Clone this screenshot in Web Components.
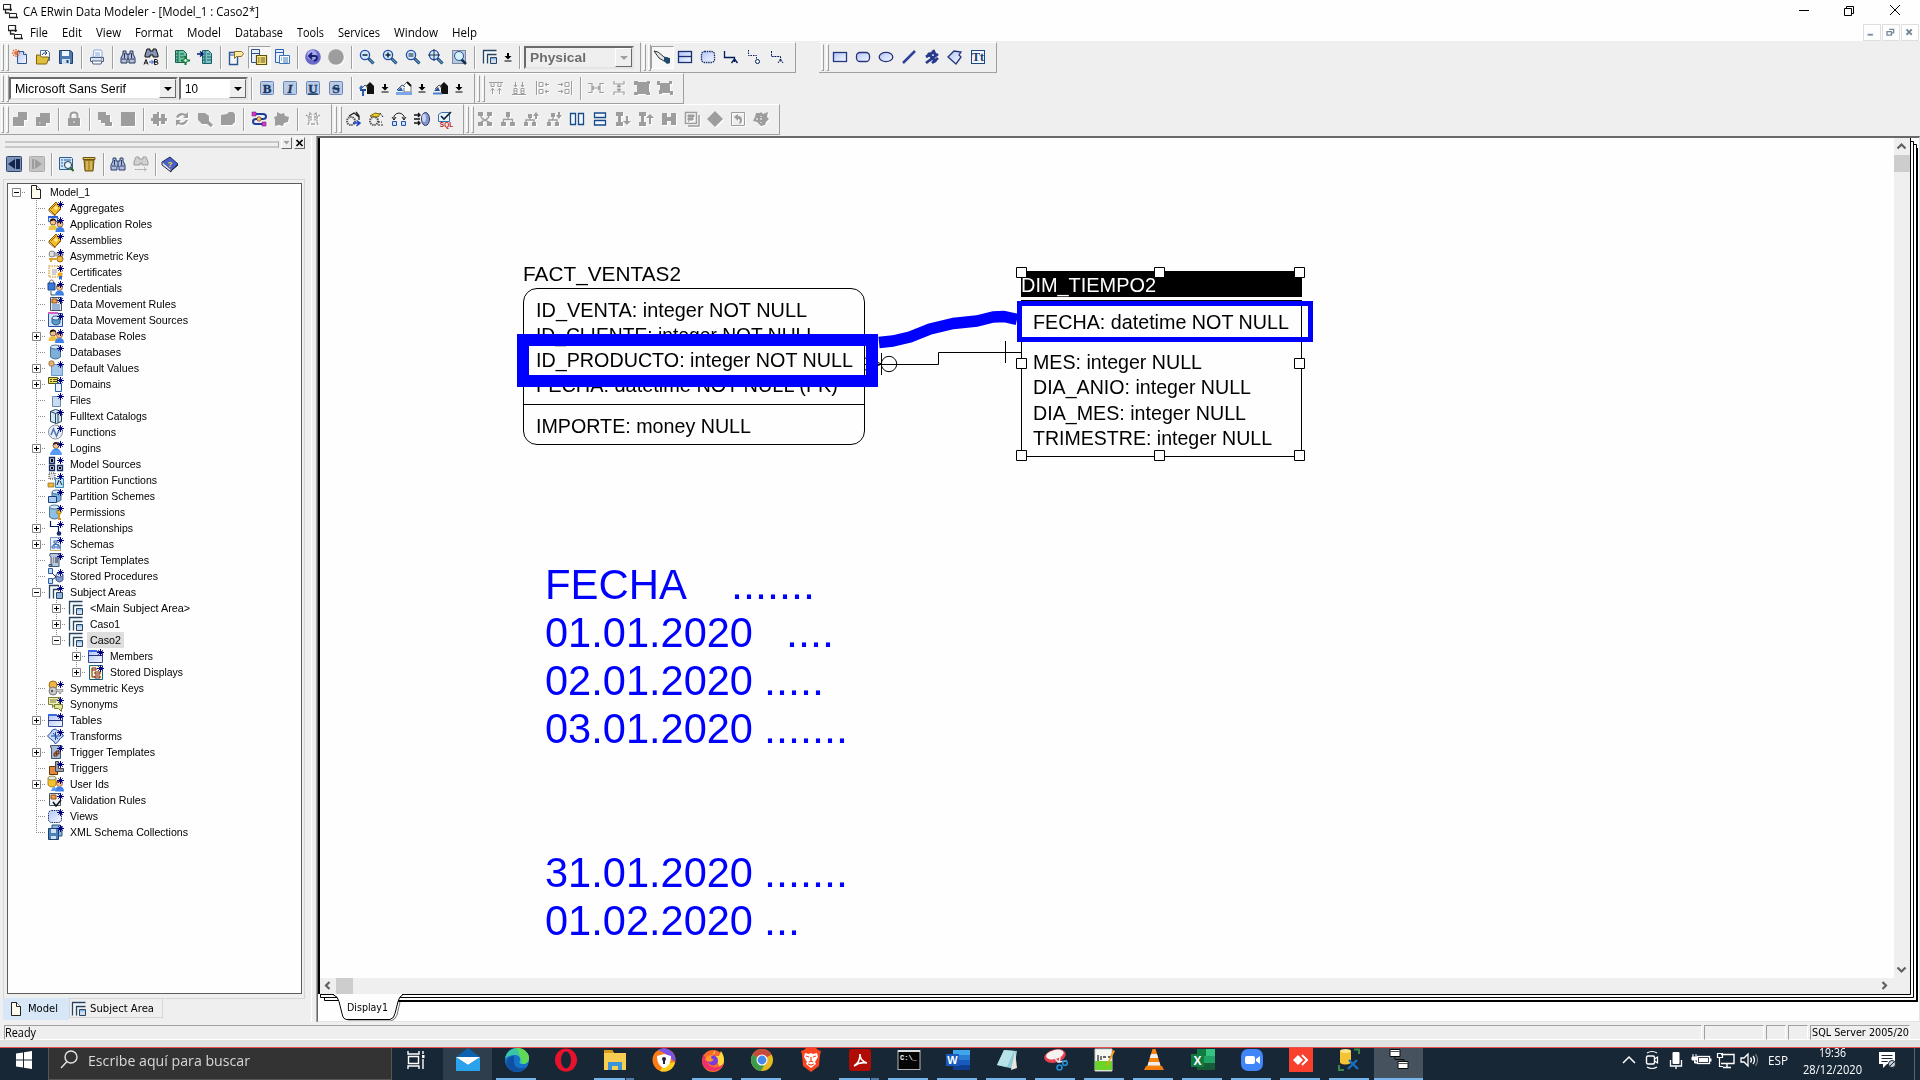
<!DOCTYPE html>
<html lang="es">
<head>
<meta charset="utf-8">
<title>CA ERwin Data Modeler</title>
<style>
html,body{margin:0;padding:0}
body{width:1920px;height:1080px;overflow:hidden;background:#efefef;font-family:"Liberation Sans",sans-serif;color:#000}
</style>
</head>
<body>
<erwin-desktop></erwin-desktop>
<script>
const star='<path d="M12.500 1v7M9 4.500h7M10.300 2.300l4.400 4.400M14.700 2.300l-4.400 4.400" stroke="#000080" stroke-width="1"/>';
const zoomGlass=(inner)=>`<path d="M9.500 9.500l5 5" stroke="#14304f" stroke-width="3"/><path d="M10 10l4.500 4.500" stroke="#4aa2d8" stroke-width="1.200"/><circle cx="6" cy="6" r="4.600" fill="#cfeafa" stroke="#2449a8" stroke-width="1.300"/>${inner}`;
const bino=(c,f)=>`<path d="M3 2h3v3h4V2h3v3l2 4v5H9v-4H7v4H1V9l2-4z" fill="${f}" stroke="${c}"/><path d="M2 10h4M10 10h4M8 5v5M4.500 4v5M11.500 4v5" stroke="${c}"/>`;
const man=(x,y,hair,shirt)=>`<circle cx="${x}" cy="${y}" r="3" fill="#f2c08a" stroke="${hair}" stroke-width=".6"/><path d="M${x-3} ${y-.5}a3 3 0 0 1 6 0l-2-1.2z" fill="${hair}"/><path d="M${x-4.500} ${y+8}q0-5 4.500-5t4.500 5z" fill="${shirt}"/>`;
const cyl=(x,y,w,h,f,s)=>`<path d="M${x} ${y+2}v${h-4}q${w/2} 4 ${w} 0v-${h-4}" fill="${f}" stroke="${s}" stroke-width=".8"/><ellipse cx="${x+w/2}" cy="${y+2}" rx="${w/2}" ry="2" fill="#d5ebfa" stroke="${s}" stroke-width=".8"/>`;
const letter=(t,s)=>`<rect x="1.500" y="1.500" width="13" height="13" rx="1" fill="#bccbe4" stroke="#6a86b8"/><text x="8" y="12.500" text-anchor="middle" font-family="Liberation Serif,serif" font-size="13" font-weight="bold" fill="#173767" stroke="#173767" stroke-width=".3" style="${s}">${t}</text>`;
const house='<path d="M7 6l4-4 4 4v8H8V8" fill="#111"/><path d="M9 7l-3-2-4 4" fill="none" stroke="#555"/>';
const T={
logo:'<path d="M1.500 1.500h7v5h-7zM7.500 10.500h7v4h-7z" fill="#fff" stroke="#222"/><path d="M8.500 1v7M3.500 7v3h4M1 6.500h9M7 14.500h9" fill="none" stroke="#222" stroke-width="1.300"/>',
new:'<path d="M5.500 2.500h6l3 3v9h-9z" fill="url(#pg)" stroke="#2c5590"/><path d="M11.500 2.500v3h3" fill="#fff" stroke="#2c5590"/><path d="M4 0v8M0 4h8M1 1l6 6M7 1L1 7" stroke="#e86a30" stroke-width="1.400" stroke-dasharray="1.500 .7"/>',
open:'<path d="M5.500 1.500h7l2 2v8h-9z" fill="#fff" stroke="#4a72a8"/><path d="M1.500 13V6h3l2 2h7v2l-2 5h-10z" fill="#e0bf3a" stroke="#7d6510"/><path d="M7 6q1-3 4-2M10 2l2 2-2 2" fill="none" stroke="#1c3f74"/>',
save:'<path d="M1.500 1.500h11l2 2v11h-13z" fill="#4a78b0" stroke="#1c3f6c"/><path d="M4 2h7v5H4z" fill="#eef4fb"/><path d="M4 10h8v5H4z" fill="#cfe0f4"/><path d="M9.500 11v3" stroke="#1c3f6c" stroke-width="2"/>',
print:'<path d="M5 1h7l1 1v6H4z" fill="#fff" stroke="#88a8d8"/><path d="M1.500 8.500h13v4h-13z" fill="#d8e4f4" stroke="#4a5f85"/><path d="M3 12h10l-1 3H4z" fill="#fff" stroke="#4a5f85"/><path d="M6 4h5M6 6h5" stroke="#7aa0e0"/><circle cx="12.500" cy="10" r=".8" fill="#e87030"/>',
find:bino('#22335a','#b4c2dc'),
repl:'<path d="M4 0h3v2h3V0h3l2 6v2h-5V6H7v2H2V6z" fill="#8494b4" stroke="#111"/><path d="M1 15.500l2-5 2 5M1.800 14h2.500M11.500 10.500v5h2q1.500-.2 1.500-1.400t-1.500-1.200h-2 1.800q1.200 0 1.200-1.200t-1.200-1.200z" fill="none" stroke="#111"/><path d="M6 13h4M8.500 11l2 2-2 2" stroke="#2255cc" fill="none"/>',
comp1:'<path d="M1.500 1.500h8l3 3v9h-11z" fill="#6dc6a0" stroke="#1d5f58"/><path d="M4 2v12M6 5h4M6 8h5M2 5h2M2 8h2M2 11h2" stroke="#1d5f58"/><path d="M11.500 7v9M7 11.500h9" stroke="#0a7a28" stroke-width="2"/><path d="M11.500 9l2.500 2.500-2.500 2.500L9 11.500z" fill="#cfe8d4" stroke="#063"/>',
comp2:'<path d="M5.500 1.500h6l3 3v10h-9z" fill="#7cc4c4" stroke="#1d5f68"/><path d="M8 2v12M10 5h3M10 8h4M10 11h4M6 8h2M6 11h2" stroke="#1d5f68"/><path d="M0 5h5M3 2.500L6 5 3 7.500" stroke="#001a70" stroke-width="1.500" fill="none"/>',
ent:'<path d="M1.500 3.500h8v12h-8z" fill="#f4f6fb" stroke="#2c5590" stroke-width="1.400"/><path d="M6.500 2.500h7l2 2-2 3h-5l-2 2z" fill="#ffeaa0" stroke="#8a6c28"/><path d="M2 6h4" stroke="#2c5590"/>',
lvl1:'<path d="M.5 .5h8v13h-8zM1 4.500h7" fill="#eaf0fb" stroke="#2d4f90"/><path d="M5.500 6.500h10v9h-10z" fill="#ffe98a" stroke="#5f5010" stroke-width="1.200"/><path d="M7 9h1.500M7 11h1.500M7 13h1.500M9.500 9h4.500M9.500 11h4.500M9.500 13h4.500" stroke="#5f5010"/>',
lvl2:'<path d="M1.500 .5h8v13h-8zM2 3.500h7" fill="#eaf0fb" stroke="#2d5fb0"/><path d="M5.500 6.500h10v8h-10z" fill="#fff" stroke="#3a78b8"/><path d="M7 9h1M7 11h1M9 9h5M9 11h5M9 13h5" stroke="#3a78b8"/>',
undo:'<circle cx="8" cy="8" r="7.800" fill="#6a68c8"/><circle cx="7" cy="6" r="5" fill="#a8a6ec"/><path d="M5 7h5q2 0 2 2t-3 3M7 4L4 7l3 3" fill="none" stroke="#15206c" stroke-width="1.800"/>',
redo:'<circle cx="8" cy="8" r="7.800" fill="#9d9d9d"/>',
zout:zoomGlass('<path d="M3.500 6h5" stroke="#123" stroke-width="1.500"/>'),
zin:zoomGlass('<path d="M3.500 6h5M6 3.500v5" stroke="#123" stroke-width="1.500"/>'),
zeq:zoomGlass('<path d="M3.500 5h5M3.500 7h5" stroke="#123" stroke-width="1.200"/>'),
zfit:zoomGlass('<path d="M6 0v12M0 6h12" stroke="#234" stroke-width="1"/>'),
zsel:'<rect x="1.500" y="1.500" width="13" height="13" fill="#b8c8e0" stroke="#235" stroke-dasharray="1 1"/><path d="M10 10l5 5" stroke="#14304f" stroke-width="2.500"/><circle cx="8" cy="7" r="4.500" fill="#d8f0fc" stroke="#235090"/>',
sub:'<path d="M1.500 1.500h13v4h-9v9h-4z" fill="#f4f8fc"/><path d="M1.500 14.500v-13h13M5.500 14.500v-9h9" fill="none" stroke="#2b4560" stroke-width="1.300"/><path d="M8.500 8.500h6v6h-6z" fill="#cfe0f4" stroke="#2b4560"/><path d="M9 9.800h5" stroke="#6aa0d8"/>',
cur:'<path d="M0 2l4 1 6 5 4 1v4l-4-1-5-3z" fill="#dfe9ef" stroke="#333"/><path d="M10 8l6 1v5l-3 1-3-3z" fill="#1f4a70"/>',
tbl:'<rect x="1.500" y="2.500" width="13" height="11" fill="url(#pg)" stroke="#1a3070" stroke-width="1.300"/><path d="M1 7.500h14" stroke="#1a3070" stroke-width="1.300"/>',
view:'<rect x="1.500" y="2.500" width="13" height="11" rx="3" fill="url(#pg)" stroke="#1a3070" stroke-width="1.300" stroke-dasharray="1.500 .8"/>',
r1:'<path d="M1.500 2v6.500h10V13M11.500 10l-3 4M11.500 10l3 4" fill="none" stroke="#001a5c" stroke-width="1.300"/>',
r2:'<path d="M2.500 1v5.500h8v3" fill="none" stroke="#001a5c" stroke-dasharray="1.500 1"/><circle cx="11.500" cy="12.500" r="2" fill="#fff" stroke="#001a5c"/>',
r3:'<path d="M2.500 2v5.500h9V13M11.500 10l-2.500 4M11.500 10l2.500 4" fill="none" stroke="#001a5c" stroke-dasharray="2 .8"/>',
s1:'<rect x="1.500" y="3.500" width="13" height="9" fill="url(#pg)" stroke="#26357c" stroke-width="1.300"/>',
s2:'<rect x="1.500" y="3.500" width="13" height="9" rx="3.500" fill="url(#pg)" stroke="#26357c" stroke-width="1.300"/>',
s3:'<ellipse cx="8" cy="8" rx="6.800" ry="4.600" fill="url(#pg)" stroke="#26357c" stroke-width="1.300"/>',
s4:'<path d="M2 14L14 2" stroke="#2c409c" stroke-width="2.500"/>',
s5:'<path d="M2 8l9-6M2 14l12-9M8 14l6-5M4 4l8 9M9 1l3 6" stroke="#28398c" stroke-width="2.800"/>',
s6:'<path d="M1 8l6-6 7 1-2 3 2 2-5 7z" fill="url(#pg)" stroke="#26357c" stroke-width="1.300"/>',
s7:'<rect x="1.500" y="1.500" width="13" height="13" fill="#f2f5fb" stroke="#1a4a80"/><text x="8" y="12" text-anchor="middle" font-family="Liberation Serif,serif" font-size="12" font-weight="bold" fill="#1a4070">Tt</text>',
B:letter('B',''),I:letter('I','font-style:italic'),U:letter('U','text-decoration:underline'),S:letter('S','text-decoration:line-through'),
hT:house+'<path d="M1 10h6M4 10v6" stroke="#1c4f9c" stroke-width="1.800"/><path d="M3 6L1 9" stroke="#2c6fcc" stroke-width="2.400"/>',
hF:'<path d="M7 6l4-4 4 4v6H8V8" fill="#fff" stroke="#777"/><path d="M11 2l4 4" stroke="#111" stroke-width="2"/><path d="M9 7l-3-2-5 5" stroke="#357" fill="none"/><path d="M0 12h16v3H0z" fill="#7aa6e4"/><path d="M1 11l4-4 2 4z" fill="#2c5fb0"/>',
hL:house+'<path d="M0 13.500h9" stroke="#4a80d0" stroke-width="2"/><path d="M1 11l4-4 2 4z" fill="#234f90"/>',
d1:'<path d="M6 1h9v8h-3v6H1V6h5z" fill="#9d9d9d"/>',d2:'<path d="M5 2h10v10h-4v3H1V6h4z" fill="#9d9d9d"/><path d="M4 12h1.500" stroke="#eee"/>',
lock:'<path d="M4.500 8V4.500q0-3 3.500-3t3.500 3V8" fill="none" stroke="#9d9d9d" stroke-width="2"/><path d="M2 7h12v8H2z" fill="#9d9d9d"/><path d="M8 10v2" stroke="#eee"/>',
d3:'<path d="M1 1h8v3h4v7h2v4H8v-3H4V9H1z" fill="#9d9d9d"/>',d4:'<path d="M1 1h14v14H1z" fill="#9d9d9d"/>',
d5:'<path d="M2 3h5v10H2zM10 3h4v10h-4zM6 1h2v14H6zM0 7h16v3H0z" fill="#9d9d9d"/>',
d6:'<path d="M2 6q2-4 6-4l4 1 2-2v6H9l2-2q-4-2-7 2zM14 9q-2 5-6 5l-4-1-2 2V9h5l-2 2q4 2 7-2z" fill="#9d9d9d"/>',
d7:'<path d="M1 2h7l4 3v5l4 4-2 2-4-3H5L1 9z" fill="#9d9d9d"/>',d8:'<path d="M1 4l6-1 2-2h4l2 2v8l-3 3H1z" fill="#9d9d9d"/>',
flow:'<path d="M3 3h9q3 0 3 2.500T12 8H5Q2 8 2 10.500T5 13h7" fill="none" stroke="#1c3f9c" stroke-width="2"/><path d="M1 1h4v4H1zM11 11h4v4h-4z" fill="#d838c0" stroke="#702090" stroke-width=".6"/><circle cx="8" cy="8" r="2.200" fill="#f0d040" stroke="#604" stroke-width=".6"/>',
d9:'<path d="M3 1l4 2 3-1 1 3 4 1-1 5-4 1-1 3-4-1-4 1V9L0 6l3-1z" fill="#9d9d9d"/>',
d10:'<path d="M1 4l3 2 1-4 2 2M15 4l-3 2-1-4-2 2M4 6v6M6 5v5M10 5v5M12 6v6M7 12v2M9 12v2M3 14l1-3M13 14l-1-3" fill="none" stroke="#9d9d9d" stroke-width="1.400" stroke-dasharray="2 .5"/>',
g1:'<circle cx="6" cy="10" r="4" fill="#eee" stroke="#555" stroke-width="2" stroke-dasharray="1.400 .8"/><path d="M4 5l5-3 5 4M11 1l3 4v4" fill="none" stroke="#222" stroke-width="1.300"/><path d="M8 12h6M11.500 9.500L15 12l-3.500 2.800" stroke="#1d3fc0" stroke-width="1.500" fill="none"/>',
g2:'<circle cx="6" cy="10" r="4" fill="#eee" stroke="#555" stroke-width="2" stroke-dasharray="1.400 .8"/><path d="M2 5l5-3 5 1-2 3z" fill="#ecca30" stroke="#7c6808"/><path d="M12 2l3 4M10 14h6M10 11h4" stroke="#222" stroke-dasharray="2 1"/>',
g3:'<path d="M3 9V5q2-3 5-3t5 3v4M1 6l2 3 2-3M11 6l2 3 2-3" fill="none" stroke="#222"/><path d="M1.500 10.500h4v4h-4zM10.500 10.500h4v4h-4z" fill="#cfe0fa" stroke="#2450b0"/>',
g4:'<path d="M0 4h6M0 8h6M0 12h6M4 2l2 2-2 2M4 10l2 2-2 2" fill="none" stroke="#111" stroke-width="1.300"/><ellipse cx="11.500" cy="8" rx="4" ry="6.500" fill="#8494cc" stroke="#28386c"/><ellipse cx="10" cy="7" rx="2" ry="4" fill="#c8d4f4"/>',
g5:'<path d="M1.500 3.500l3-2h8v9h-11z" fill="#eaf4fc" stroke="#3a70a8"/><path d="M4 5l3 3 7-7" fill="none" stroke="#123" stroke-width="1.600"/><text x="9.500" y="15.500" text-anchor="middle" font-family="Liberation Sans,sans-serif" font-size="6.500" font-weight="bold" fill="#c02020">SQL</text>',
a1:'<path d="M1 2.500h14M3 2.500v4h3v-4M10 2.500v4h3v-4M4.500 8v6M11.500 8v6M2.500 10.500l2-2 2 2M9.500 10.500l2-2 2 2" fill="none" stroke="#9d9d9d"/>',
a2:'<path d="M1 14.500h14M3 8.500h3v5H3zM10 8.500h3v5h-3zM3 11h3M10 11h3M4.500 2v5M11.500 2v5M3 5l1.500 2L6 5M10 5l1.500 2L13 5" fill="none" stroke="#9d9d9d"/>',
a3:'<path d="M2.500 1v14M5 2.500h4v4H5zM5 9.500h4v4H5zM15 4.500h-4M13 3l-2 1.500L13 6M15 11.500h-4M13 10l-2 1.500 2 1.500" fill="none" stroke="#9d9d9d"/>',
a4:'<path d="M14.500 1v14M8 2.500h4v4H8zM8 9.500h4v4H8zM1 4.500h5M4 3l2 1.500L4 6M1 11.500h5M4 10l2 1.500L4 13" fill="none" stroke="#9d9d9d"/>',
a5:'<path d="M0 3.500h4v9H0M16 3.500h-4v9h4M4 8h8M6 6L4.500 8 6 10M10 6l1.500 2L10 10" fill="none" stroke="#9d9d9d" stroke-width="1.200"/>',
a6:'<path d="M3 1v3h10V1M3 15v-3h10v3M8 5v6M6 7l2-2 2 2M6 9l2 2 2-2" fill="none" stroke="#9d9d9d" stroke-width="1.200"/>',
a7:'<path d="M0 1h4v1h9V1h3v3h-1v8h1v3h-4v-1H4v1H0v-3h3V5H0z" fill="#9d9d9d"/>',
a8:'<path d="M0 1h3v2h9V1h3v3h-2v7h3v4h-3v-2H5v1H2v-4h1V5H0z" fill="#9d9d9d"/>',
t1:'<path d="M1 1h5v4H1zM10 1h5v4h-5zM1 11h5v4H1zM10 11h5v4h-5z" fill="#9d9d9d"/><path d="M4 5q0 3 8 6M12 5q0 3-8 6" stroke="#9d9d9d" fill="none" stroke-width="1.500"/>',
t2:'<path d="M6 1h4v5H6zM1 11h5v4H1zM10 11h5v4h-5z" fill="#9d9d9d"/><path d="M8 6v3M3.500 11V8.500h9V11" stroke="#9d9d9d" fill="none" stroke-width="1.300"/>',
t3:'<path d="M5 3h4v4H5zM1 11h4v4H1zM9 11h4v4H9zM10 5l3-4 3 4h-2v3h-2V5z" fill="#9d9d9d"/><path d="M7 7v2M3 11V9h8v2" stroke="#9d9d9d" fill="none" stroke-width="1.400"/>',
t4:'<path d="M5 2h4v4H5zM1 11h4v4H1zM9 11h4v4H9zM10 4l3 4 3-4h-2V1h-2v3z" fill="#9d9d9d"/><path d="M7 6v3M3 11V9h8v2" stroke="#9d9d9d" fill="none" stroke-width="1.400"/>',
c1:'<path d="M1.500 2.500h5v11h-5zM9.500 2.500h5v11h-5z" fill="#f2f7ff" stroke="#174a88" stroke-width="1.300"/>',
c2:'<path d="M2.500 2h11v4.500h-11zM2.500 9.500h11V14h-11z" fill="#f2f7ff" stroke="#174a88" stroke-width="1.300"/>',
t5:'<path d="M1 1h7v4H1zM1 11h7v4H1zM3 5h3v6H3zM11 5h2v5h3l-4 4-4-4h3z" fill="#9d9d9d"/>',
t6:'<path d="M1 1h7v4H1zM1 11h7v4H1zM3 5h3v6H3zM11 13h2V7h3l-4-4-4 4h3z" fill="#9d9d9d"/>',
t7:'<path d="M1 2h5v12H1zM10 2h5v12h-5zM6 6h4v4H6z" fill="#9d9d9d"/>',
t8:'<path d="M1.500 1.500h11v11h-11zM15 4v11H4" fill="none" stroke="#9d9d9d" stroke-width="1.500"/><path d="M4 4h6v2H4zM4 7h5v2H4zM4 11l6-6" fill="#9d9d9d" stroke="#9d9d9d"/>',
t9:'<path d="M8 0l8 8-8 8-8-8z" fill="#9d9d9d"/>',
t10:'<path d="M1.500 1.500h13v13h-13z" fill="none" stroke="#9d9d9d"/><path d="M4 6l4-3v2q4 0 4 4t-3 4q2-5-1-5v2z" fill="#9d9d9d"/>',
t11:'<path d="M8 1l2 2 5-2-1 5 2 2-3 3-1 3-4 1-4-4-4-1 2-4 1-4h4z" fill="#9d9d9d"/><path d="M3 8h2M7 8h2M8 5v1M8 11v1" stroke="#fff"/>',
back:'<rect x=".5" y=".5" width="15" height="15" rx="1" fill="#7d93b8" stroke="#2d4470"/><path d="M2 8l7-5v10zM10 3h4v10h-4z" fill="#13254c"/>',
fwd:'<rect x=".5" y=".5" width="15" height="15" rx="1" fill="#c4c4c4" stroke="#acacac"/><path d="M3 3h2v10H3zM6 3l7 5-7 5z" fill="#9d9d9d"/>',
prop:'<path d="M1.500 1.500h12l1 1v11h-13z" fill="#cfe4fa" stroke="#2c5f98"/><path d="M3 4h2M6 4h7M3 7h2M3 10h2M6 7h3" stroke="#2c5f98"/><circle cx="10" cy="9" r="3.500" fill="#e8f6ff" stroke="#234"/><path d="M12.500 11.500l3 3.500" stroke="#286a28" stroke-width="2"/>',
trash:'<path d="M3 4h10l-1 11H4z" fill="#b8942c" stroke="#6c5410"/><path d="M2 1.500h12v2H2z" fill="#e0c060" stroke="#6c5410"/><path d="M6 5v9M10 5v9" stroke="#ecd890"/>',
find2:bino('#2a3c68','#aebddd'),
findg:'<path d="M3 1h3v2h4V1h3l2 5v3H9V7H7v2H1V6z" fill="#d0d0d0" stroke="#9d9d9d"/><path d="M2 13.500h11M11 11.500l2.500 2-2.500 2" fill="none" stroke="#9d9d9d" stroke-dasharray="1.500 .6"/>',
help:'<path d="M0 6l8-5 8 7-7 7z" fill="#4a5fc4" stroke="#1a2a6c"/><path d="M0 6v3l9 7v-2M9 15l7-6" fill="#e8e8f4" stroke="#223"/><text x="8" y="10.500" text-anchor="middle" font-size="8" font-weight="bold" fill="#f4e440" font-family="Liberation Sans,sans-serif">?</text>',
doc:'<path d="M3.500 1.500h5l4 4v9h-9z" fill="#fffbee" stroke="#222"/><path d="M8.500 1.500v4h4" fill="#fff" stroke="#222"/>',
agg:'<path d="M1 9l7-7 5 6-6 7z" fill="#f6bf28" stroke="#8a5c08"/><path d="M1 9v2l6 5v-2M3 9l5-5M7 15l6-6" fill="none" stroke="#9a6810"/><path d="M6 8l2-2 2 2-2 2z" fill="#fff0a0"/>'+star,
arole:'<path d="M.5 .5h9v5h-9z" fill="#cfe0fc" stroke="#3a6fd0"/><path d="M0 1h10" stroke="#2c5fd0" stroke-width="2"/>'+man(5,6,'#201008','#ecc848')+man(12,8,'#503018','#3f80e8')+star,
key:'<circle cx="4" cy="6" r="3" fill="#e0e0e0" stroke="#888"/><path d="M6 5h9v3H6z" fill="#bbb" stroke="#777" stroke-width=".6"/><circle cx="12" cy="11" r="3" fill="#f0b840" stroke="#9a6410"/><path d="M1 10h9v2H1zM2 12h2v2H2z" fill="#e0a030"/>'+star,
cert:'<path d="M1 2h13v11H1z" fill="#fff7e0" stroke="#d8b070" stroke-width="1.600" stroke-dasharray="1.500 1"/><path d="M4 6h5M4 8h5M4 10h4" stroke="#98a8c0"/><circle cx="12" cy="10.500" r="2.300" fill="#f0a818"/><path d="M11 12v4l1.500-1 1.500 1v-4z" fill="#2c6fd8"/>'+star,
cred:'<path d="M1.500 3V2q0-2 2-2t2 2v1" fill="none" stroke="#777"/><path d="M0 3h7v7H0z" fill="#3a78d8" stroke="#1a4890"/><path d="M3 11v4h4" stroke="#357" fill="none"/>'+man(11.500,7.500,'#503018','#3f80e8')+star,
drule:'<path d="M2.500 1.500h11v13h-11z" fill="#e8eef8" stroke="#456"/><path d="M4 3h5v4H4z" fill="#f0a040" stroke="#852"/><path d="M4 9h8M4 11h8M4 13h8" stroke="#4878b0"/>'+star,
dsrc:'<path d="M.5 1.500h14v13H.5z" fill="#d0e4fa" stroke="#2c50a8"/><path d="M0 1h10" stroke="#d860c0" stroke-width="2"/>'+cyl(4,4,8,9,'#5a9cd0','#1d4470')+star,
drole:man(5,5,'#201008','#f0c040')+man(11.500,7,'#803818','#3f80e8')+star,
db:cyl(2.500,1,10,14,'#7cb0d8','#2c5880')+star,
defv:'<path d="M3.500 4.500h11v11h-11z" fill="#a4c8ec" stroke="#6a98c8"/><rect x="1" y="1" width="5" height="5" rx="1.500" fill="#dcb078" stroke="#a07838"/>'+star,
dom:'<path d="M.5 1.500h9v6h-9z" fill="#e8e060" stroke="#55500c"/><path d="M2 3.500h2M5 3.500h4M2 5.500h2M5 5.500h4" stroke="#55500c"/><path d="M7.500 7.500h6v8h-6z" fill="#eaf2fc" stroke="#2c5fa8"/>'+star,
file:'<path d="M4.500 4.500h8v10h-8z" fill="#c8dcf0" stroke="#6a88b0"/>'+star,
cat:'<path d="M2.500 3.500l5-2 6 2v10l-5 2-6-2z" fill="#d4e6f4" stroke="#234458"/><path d="M2.500 3.500l5 2 5-2M7.500 5.500v10M10 5v9.500" fill="none" stroke="#234458"/>'+star,
fun:'<circle cx="7.500" cy="8" r="7" fill="#eceef4" stroke="#8a90a0"/><path d="M3 11l2.500-6 3 7 2.500-6" fill="none" stroke="#4878b8" stroke-width="1.500"/>'+star,
login:man(8,5.500,'#402010','#3f88f0')+'<path d="M2 15q0-5 6-5t6 5z" fill="#5a9cf4"/>'+star,
msrc:'<path d="M1.500 1.500h5v6h-5zM1.500 9.500h5v5h-5zM9.500 9.500h5v5h-5z" fill="#c4d4ec" stroke="#182c60" stroke-width="1.300"/><path d="M3 4h2M3 12h2M11 12h2M4 3v3" stroke="#000" stroke-width="2"/>'+star,
pfun:'<path d="M1 1h6v6H1z" fill="#ddd" stroke="#333" stroke-dasharray="1 1"/><path d="M0 11h6v4H0z" fill="#f0b840" stroke="#8a6410" stroke-width=".7"/><path d="M7.500 6.500h8v9h-8z" fill="#bce0f4" stroke="#3a88b8"/><path d="M9 13l2-5M12 9l2 4" stroke="#124" />'+star,
psch:cyl(4,2,9,12,'#7cb0d8','#2c5880')+'<path d="M.5 8.500h8v6h-8z" fill="#a8ccf0" stroke="#1c3c80"/>'+star,
perm:cyl(1.500,1,10,14,'#8cc0e4','#2c5880')+'<circle cx="11" cy="8" r="2.200" fill="#f8c030" stroke="#a06c10"/><path d="M11 10v5h2" stroke="#d89820" stroke-width="1.800" fill="none"/>'+star,
rel:'<path d="M2.500 1v5.500h8V13" fill="none" stroke="#001a5c" stroke-width="1.200"/><circle cx="11" cy="13.500" r="2.300" fill="#1a2a70"/>'+star,
sch:'<path d="M2.500 1.500h10v13h-10z" fill="#e8f0fc" stroke="#7a98c8"/><path d="M6 5h3v2H6zM4 10h3v2H4zM9 10h3v2H9zM7.500 7v2M5.500 10V8.500h5V10" fill="none" stroke="#3a68b0"/><path d="M2 14.500h11" stroke="#d8b468"/>'+star,
scr:'<path d="M2 1.500h11q-2 1-2 4v9H3v-9Q1 4 2 1.500zM1 12.500h3v2H1z" fill="#b8c8dc" stroke="#3c5478"/><path d="M5 6h1M5 8h1M5 10h1" stroke="#d03030"/><path d="M7 6h3M7 8h3M7 10h3" stroke="#234"/>'+star,
sp:'<path d="M.5 .5h4v5h-4zM.5 10.500h4v5h-4z" fill="#c4dcf8" stroke="#2c60a8"/><path d="M4 5l4 4-4 3" stroke="#234" fill="none"/>'+cyl(8,5,7,9,'#8098d0','#2c4080')+star,
suba:'<path d="M1.500 1.500h13v4h-9v9h-4z" fill="#f4f8fc"/><path d="M1.500 14.500v-13H11M5.500 14.500v-9h6" fill="none" stroke="#2b4560" stroke-width="1.300"/><path d="M8.500 8.500h6v6h-6z" fill="#8cb4e4" stroke="#2b4560"/>'+star,
memb:'<path d="M.5 3.500h14v11H.5z" fill="url(#pg)" stroke="#3a4a98"/><path d="M0 3h9" stroke="#3a68e0" stroke-width="2"/><path d="M0 7.500h15" stroke="#26357c"/>'+star,
sdisp:'<path d="M1.500 1.500h13v14h-13z" fill="#fff4c8" stroke="#146488"/><path d="M4 4h4v2H4zM7 8h5v2H7zM7 12h5v2H7zM4 6v7h3" fill="none" stroke="#702020"/>'+star,
skey:'<circle cx="5" cy="5" r="4" fill="#f0b440" stroke="#a06c10"/><circle cx="5" cy="11" r="4" fill="#ccc" stroke="#777"/><circle cx="4" cy="11" r="1.200" fill="#555"/><path d="M8 9.500h7v2h-2v2h-2v-2H8z" fill="#ccc" stroke="#777" stroke-width=".6"/>'+star,
syn:'<path d="M.5 1.500h11v7h-5l-2 3v-3h-4z" fill="#f0f0b0" stroke="#7a7a3c"/><path d="M2 4h8M2 6h6" stroke="#7a7a3c"/><path d="M6.500 8.500h8v4h-1v3l-3-3h-4z" fill="#e4e890" stroke="#7a7a3c"/>'+star,
tabl:'<path d="M.5 3.500h14v11H.5z" fill="url(#pg)" stroke="#3a4a98"/><path d="M0 3h9" stroke="#3a68e0" stroke-width="2"/><path d="M0 8.500h15" stroke="#26357c"/>'+star,
trans:'<path d="M7.500 1l2 2 3 1 3 4-3 2-2 3-3 3-2-3-3-2-3-3 3-3 2-3z" fill="#c8daf8" stroke="#1c48a0"/><path d="M3 8h9M7.500 4v8M5 5l5 6" stroke="#1c48a0"/>'+star,
ttpl:'<path d="M2.500 1.500h11v2h-1v11h-9v-11h-1z" fill="#a8bcd4" stroke="#3c5478"/><path d="M6 9h3v3H6zM8 7h3v3H8z" fill="#d87838" stroke="#532"/>'+star,
trig:'<path d="M1.500 6.500h8v8h-8z" fill="#e08840" stroke="#6c3808"/><path d="M7.500 1.500h3v7h5v3h-8z" fill="#98a0ac" stroke="#445"/>'+star,
user:cyl(0,0,8,11,'#f4c430','#9a7408')+man(11.500,7.500,'#803818','#3f80e8')+'<path d="M3 15q1-4 4-4l2 4z" fill="#5a9cf4"/>'+star,
vrul:'<path d="M1.500 1.500h11v12h-11z" fill="#eef2f8" stroke="#456"/><path d="M3 3h5v4H3z" fill="#f0a040" stroke="#852"/><path d="M5 10l3 4 5-6" fill="none" stroke="#111" stroke-width="1.500"/>'+star,
tview:'<rect x=".5" y="2.500" width="13" height="12" rx="3" fill="url(#pg)" stroke="#1a3070" stroke-dasharray="1.500 .8"/>'+star,
xml:'<path d="M4 1h8l2 2v9H4z" fill="#88b4dc" stroke="#2c5078"/><path d="M.5 4.500h10v11H.5z" fill="#4a80b8" stroke="#1c4070"/><path d="M3 5h5v4H3zM3 12h5v3H3z" fill="#cfe0f4"/>'+star
};
/* taskbar icons, 24 x 24 */
const W={
win:'<path d="M4 5.500l7-1v7H4zM12 4.300l8-1.200v8.400h-8zM4 12.500h7v7l-7-1zM12 12.500h8V21l-8-1.200z" fill="#fff"/>',
search:'<circle cx="14" cy="9" r="6" fill="none" stroke="#e4e4e4" stroke-width="1.400"/><path d="M10 13.500L4 20" stroke="#e4e4e4" stroke-width="1.400"/>',
task:'<path d="M4 3v3h11V3M4 21v-3h11v3M4.500 8.500h10v7h-10zM19 3v3M19 11v10" fill="none" stroke="#fff" stroke-width="1.400"/><path d="M18 7h2.500v3H18z" fill="#fff"/>',
mail:'<path d="M0 9L12 0l12 9v14H0z" fill="#0d62b0"/><path d="M0 9h24L12 17z" fill="#fff"/><path d="M0 9l12 8 12-8v14H0z" fill="#2ba2ec"/><path d="M0 9h24l-12 7z" fill="#fff"/>',
edge:'<circle cx="12" cy="12" r="12" fill="#1671c8"/><path d="M0 11C1 4 6 0 12 0c7 0 12 5 12 10 0 4-3 6-6 6-4 0-4-2-3-3 1-4-2-6-5-6-5 0-9 2-10 4z" fill="#39c6a8"/><path d="M12 0c7 0 12 5 12 10 0 4-3 6-6 6z" fill="#62d858"/><path d="M9 12c-1 7 5 10 12 7-5 7-16 6-19-1-2-6 2-10 7-10" fill="#0f50a0"/>',
opera:'<ellipse cx="12" cy="12" rx="11" ry="11.500" fill="#e8122c"/><ellipse cx="12" cy="12" rx="5" ry="8.500" fill="#182736"/>',
expl:'<path d="M1 2h8l2 3h12v17H1z" fill="#f8ce52"/><path d="M1 2h8l2 3H1z" fill="#d89c1c"/><path d="M5 22v-8h14v8h-4v-4H9v4z" fill="#3a94dc"/>',
avast:'<circle cx="12" cy="12" r="11.500" fill="#fb7c14"/><path d="M6 2a11.500 11.500 0 0 1 17 12L14 6z" fill="#7a52e8"/><path d="M23 14a11.500 11.500 0 0 1-15 9l4-7z" fill="#f8d020"/><path d="M5 8l7-2 7 2c0 7-3 11-7 12-4-1-7-5-7-12z" fill="#fff"/><circle cx="12" cy="11" r="2" fill="#223"/><path d="M12 11v5" stroke="#223" stroke-width="2"/>',
ff:'<circle cx="12" cy="13" r="11" fill="#fb6a2c"/><path d="M14 2c1 4-2 3-2 6l6 0 2-5c4 6 4 12 0 17-4-3-4-12-9-12z" fill="#ffd83a"/><path d="M1 14c2 10 18 13 22 1-6 7-16 6-17-3L2 6z" fill="#f0306c"/><circle cx="12" cy="12.500" r="5" fill="#7a3ce0"/><path d="M6 8l5-1-1 3 3 2-4 2-5-2z" fill="#ff9a28"/>',
chrome:'<circle cx="12" cy="12" r="11" fill="#e8b820"/><path d="M12 12L2.500 6.500a11 11 0 0 1 19 0z" fill="#c84a3c"/><path d="M12 12L2.500 6.500A11 11 0 0 0 11 23l5-9z" fill="#3f9a4c"/><circle cx="12" cy="12" r="5.500" fill="#fff"/><circle cx="12" cy="12" r="4.400" fill="#4a88ec"/>',
brave:'<path d="M7 0h10l2 2 3 1-1 4-1 11-8 6-8-6L3 7 2 3l3-1z" fill="#fa4420"/><path d="M6 5l4 1 2-1 2 1 4-1 1 4-3 5 1 2-5 4-5-4 1-2-3-5z" fill="#fff"/><path d="M7 8l3 1M17 8l-3 1M12 9v4l-2 1M12 13l2 1M9 16l3 1 3-1" stroke="#fa4420" stroke-width="1.200" fill="none"/>',
pdf:'<rect x="1" y="1" width="22" height="22" rx="3" fill="#b00c04"/><path d="M6 18c5-3 6-8 6-12 0 5 3 8 7 9-5-1-9 0-13 3z" fill="none" stroke="#fff" stroke-width="1.600"/>',
cmd:'<rect x="1" y="2.500" width="22" height="19" fill="#050505" stroke="#b8b8b8"/><path d="M1 3h22" stroke="#ddd" stroke-width="2"/><text x="3" y="12" font-size="7" font-family="Liberation Mono,monospace" font-weight="bold" fill="#fff">C:\\_</text>',
word:'<path d="M7 2h17v20H7z" fill="#2b7cd3"/><path d="M7 2h17v5H7z" fill="#41a5ee"/><path d="M7 12h17v5H7z" fill="#185abd"/><path d="M7 17h17v5H7z" fill="#103f91"/><path d="M0 6h13v12H0z" fill="#185abd"/><text x="6.500" y="16" text-anchor="middle" font-size="11" font-weight="bold" font-family="Liberation Sans,sans-serif" fill="#fff">W</text>',
note:'<path d="M9 2l13 1-3 18-17-4z" fill="#8ccad8"/><path d="M9 2l10 1-7 16-10-2z" fill="#b8e2ea"/><path d="M20 3l2 17-6 2z" fill="#e8e4dc"/>',
snip:'<ellipse cx="11" cy="8" rx="11" ry="6.500" fill="#e84050" transform="rotate(-15 11 8)"/><ellipse cx="11" cy="6.500" rx="9" ry="4.500" fill="#f6f2ee" transform="rotate(-15 11 7)"/><path d="M10 9l4 5 9-1M16 9l-1 6" stroke="#e8e8e8" stroke-width="1.500" fill="none"/><circle cx="21" cy="15" r="2.300" fill="none" stroke="#2090d8" stroke-width="1.600"/><circle cx="15.500" cy="19.500" r="2.500" fill="none" stroke="#2090d8" stroke-width="1.600"/>',
npp:'<path d="M2 1h17v22H2z" fill="#f4f8f0" stroke="#ccc"/><path d="M2 13h17v9H2z" fill="#6cd428"/><path d="M5 7v6M8 8v4M10 9h3M15 9h3" stroke="#333" stroke-width="1.300"/><path d="M20 2l2 1-7 14-2 1z" fill="#f0a020"/>',
vlc:'<path d="M4 18h16l2 4H2z" fill="#f47c0c"/><path d="M10.500 1h3L19 19H5z" fill="#f88410"/><path d="M9 6h6l1.300 4H7.700zM6.600 14h10.800l1 3.500H5.600z" fill="#eee"/>',
excel:'<path d="M6 1h18v21H6z" fill="#21a366"/><path d="M6 1h9v7H6z" fill="#107c41"/><path d="M15 1h9v7h-9z" fill="#33c481"/><path d="M6 15h18v7H6z" fill="#185c37"/><path d="M0 6h13v13H0z" fill="#107c41"/><text x="6.500" y="16.500" text-anchor="middle" font-size="12" font-weight="bold" font-family="Liberation Sans,sans-serif" fill="#fff">X</text>',
zoom:'<rect x="1" y="1" width="22" height="22" rx="7" fill="#3f86fa"/><rect x="5" y="8" width="10" height="8" rx="2" fill="#fff"/><path d="M16 11l4-3v8l-4-3z" fill="#fff"/>',
any:'<path d="M0 0h24v24H0z" fill="#f8402c"/><path d="M9 7l5 5-5 5-5-5z" fill="#fff"/><path d="M13 7l5 5-5 5" fill="none" stroke="#fff" stroke-width="2"/>',
ssms:'<path d="M2 3v12q5 3 11 0V3z" fill="#f4c434"/><ellipse cx="7.500" cy="3" rx="5.500" ry="2" fill="#fce488"/><path d="M16 1.500h5V6M1 17v5h5" fill="none" stroke="#38884c" stroke-width="2"/><path d="M10 21l9-9M11 12l9 9" stroke="#1a70c0" stroke-width="2.300"/>',
erw:'<path d="M3 1.500h10v7H3zM11 13.500h10v7H11z" fill="#fff" stroke="#0c0c0c"/><path d="M3 3.500h10M11 15.500h10" stroke="#555"/><path d="M8 8.500v3h9v2" fill="none" stroke="#0c0c0c"/>',
chev:'<path d="M6 15l6-6 6 6" fill="none" stroke="#fff" stroke-width="1.500"/>',
meet:'<rect x="6.500" y="8" width="8" height="8" rx="1.500" fill="none" stroke="#fff" stroke-width="1.400"/><path d="M14.500 11l3-2v6l-3-2M7 5q5-3 10 0M7 19q5 3 10 0" fill="none" stroke="#fff" stroke-width="1.200"/>',
mic:'<rect x="8.500" y="4" width="7" height="12" rx="1" fill="#fff"/><path d="M6.500 12v6h11v-6M12 18v3" fill="none" stroke="#fff" stroke-width="1.300"/>',
bat:'<rect x="9.500" y="8.500" width="12" height="7" fill="none" stroke="#fff" stroke-width="1.300"/><path d="M11 10h9v4h-9zM22 10.500h1.500v3H22z" fill="#fff"/><path d="M5 6v3M8 6v3M4 9h5v3H4zM6.500 12v3h3" fill="#fff" stroke="#fff"/>',
net:'<path d="M8 6.500h13v9H8M14 16v3M10 19.500h8" fill="none" stroke="#fff" stroke-width="1.400"/><path d="M4.500 5.500h5v4h-5zM6.500 9.500v9H10" fill="none" stroke="#fff" stroke-width="1.200"/>',
vol:'<path d="M4 10h3l4-4v12l-4-4H4z" fill="none" stroke="#fff" stroke-width="1.300"/><path d="M13.500 9.500q2 2.500 0 5M16 8q3 4 0 8" fill="none" stroke="#fff" stroke-width="1.300"/><path d="M18.500 6q4 6 0 12" fill="none" stroke="#8a939b"/>',
msg:'<path d="M4 4h16v12h-8l-4 4v-4H4z" fill="#fff"/><path d="M6.500 7.500h11M6.500 10.500h11M6.500 13.500h6" stroke="#182736" stroke-width="1.200"/><circle cx="17" cy="16" r="3.500" fill="#ccd2d8" stroke="#182736"/><path d="M15 18l4-4" stroke="#182736"/>'
};
const def=(tag,cls)=>customElements.define(tag,cls);
const base=css=>`<style>*{box-sizing:border-box}${css}</style>`;

class AppIcon extends HTMLElement{
 connectedCallback(){
  const n=this.getAttribute('name'),big=n in W&&this.hasAttribute('big'),s=big?24:16;
  this.attachShadow({mode:'open'}).innerHTML=base(`:host{display:block;flex:none;width:${s}px;height:${s}px}svg{display:block;overflow:visible}`)+
  `<svg width="${s}" height="${s}" viewBox="0 0 ${s} ${s}"><defs><linearGradient id="pg" x1="0" y1="0" x2="1" y2="1"><stop offset="0" stop-color="#b4c6f8"/><stop offset="1" stop-color="#f4f8ff"/></linearGradient></defs>${(big?W:T)[n]||''}</svg>`;
 }
}
def('app-icon',AppIcon);

/* One line of text squeezed or stretched to an exact width */
class FitText extends HTMLElement{
 connectedCallback(){
  const w=+this.getAttribute('w');
  if(!this.shadowRoot)this.attachShadow({mode:'open'}).innerHTML=base(`:host{display:block;flex:none;width:${w}px;white-space:pre}span{display:inline-block;transform-origin:0 50%;white-space:pre}`)+'<span><slot></slot></span>';
  const fit=()=>{const s=this.shadowRoot.querySelector('span');s.style.transform='none';const m=s.getBoundingClientRect().width;if(m)s.style.transform=`scaleX(${w/m})`};
  fit();requestAnimationFrame(fit);
 }
}
def('fit-text',FitText);

class TitleBar extends HTMLElement{
 connectedCallback(){
  this.attachShadow({mode:'open'}).innerHTML=base(`
  :host{display:flex;height:22px;background:#fefefe;align-items:center;padding-left:2px;font:12px/16px "Open Sans",sans-serif}
  app-icon{margin-top:-1px}fit-text{margin:1px 0 0 5px}svg{margin:-2px 0 0 auto;flex:none}`)+
  `<app-icon name="logo"></app-icon><fit-text w="236">CA ERwin Data Modeler - [Model_1 : Caso2*]</fit-text>
  <svg width="121" height="20" viewBox="0 0 121 20"><path d="M0 10.500h10M45.500 8.500h7v7h-7zM47.500 8.500v-2h7v7h-2M91 5l10 10M101 5L91 15" fill="none" stroke="#000"/></svg>`;
 }
}
def('title-bar',TitleBar);

class MenuBar extends HTMLElement{
 connectedCallback(){
  const m=[['File',18],['Edit',20],['View',25],['Format',38],['Model',34],['Database',48],['Tools',27],['Services',42],['Window',44],['Help',25]];
  this.attachShadow({mode:'open'}).innerHTML=base(`
  :host{display:flex;height:19px;background:#fefefe;align-items:center;padding-left:7px;font:12px/16px "Open Sans",sans-serif}
  nav{display:flex;gap:14px;margin:3px 0 0 7px}
  .c{display:flex;gap:1px;margin:2px 1px 0 auto}svg{border:1px solid #dedede;display:block}`)+
  `<app-icon name="logo"></app-icon><nav>${m.map(([t,w])=>`<fit-text w="${w}">${t}</fit-text>`).join('')}</nav>
  <div class="c"><svg width="18" height="17" viewBox="0 0 18 17"><path d="M4 11h6" stroke="#74869c" stroke-width="2"/></svg>
  <svg width="18" height="17" viewBox="0 0 18 17"><path d="M4.500 7.500h5v4h-5zM7 5h5v4h-2" fill="none" stroke="#74869c" stroke-width="1.500"/></svg>
  <svg width="18" height="17" viewBox="0 0 18 17"><path d="M5 5l6 6M11 5l-6 6" stroke="#74869c" stroke-width="2.200"/></svg></div>`;
 }
}
def('menu-bar',MenuBar);

class ToolBand extends HTMLElement{
 connectedCallback(){
  this.attachShadow({mode:'open'}).innerHTML=base(`
  :host{display:flex;flex:none;height:31px;border:1px solid #a0a0a0;border-top-color:#fff;border-left:0;align-items:center;width:${this.getAttribute('w')}px}
  .g{flex:none;width:10px;height:27px;padding-left:2px;display:flex;gap:2px}.g i{width:3px;border:1px solid;border-color:#fff #a0a0a0 #a0a0a0 #fff}`)+
  `<div class="g"><i></i><i></i></div><slot></slot>`;
 }
}
def('tool-band',ToolBand);

class ToolButton extends HTMLElement{
 connectedCallback(){
  const grey=/^(d\d+|lock|a\d|t\d+|redo)$/.test(this.getAttribute('icon'));
  this.attachShadow({mode:'open'}).innerHTML=base(`
  :host{display:flex;flex:none;box-sizing:border-box;width:23px;height:23px;align-items:flex-start;padding:2px 0 0 2px;border:1px solid transparent}
  :host([pressed]){background:#f7f7f7;border-color:#a0a0a0 #fff #fff #a0a0a0}
  app-icon{${grey?'filter:drop-shadow(1px 1px 0 #fff)':''}}`)+`<app-icon name="${this.getAttribute('icon')}"></app-icon>`;
 }
}
def('tool-button',ToolButton);

class ToolSep extends HTMLElement{
 connectedCallback(){this.attachShadow({mode:'open'}).innerHTML=base(':host{display:flex;flex:none;width:var(--sep,8px);height:23px;justify-content:center}i{width:2px;border-left:1px solid #a0a0a0;border-right:1px solid #fff}')+'<i></i>'}
}
def('tool-sep',ToolSep);

class DropArrow extends HTMLElement{
 connectedCallback(){this.attachShadow({mode:'open'}).innerHTML=base(':host{display:block;flex:none;width:14px;height:11px}svg{display:block}')+'<svg width="12" height="11" viewBox="0 0 12 11"><path d="M5 1h2v3h2.500L6 7.500 2.500 4H5zM2.500 8.500h7v1h-7z" fill="#000"/></svg>'}
}
def('drop-arrow',DropArrow);

class ComboBox extends HTMLElement{
 connectedCallback(){
  const d=this.hasAttribute('disabled');
  this.attachShadow({mode:'open'}).innerHTML=base(`
  :host{display:flex;flex:none;box-sizing:border-box;height:23px;width:${this.getAttribute('w')}px;border:2px solid;border-color:#6b6b6b #e4e4e4 #e4e4e4 #6b6b6b;background:${d?'#efefef':'#fff'};padding-left:4px;align-items:center;justify-content:space-between;font-size:13px;line-height:15px;color:${d?'#6d6d6d':'#000'}}
  .b{width:17px;height:19px;background:#efefef;border:1px solid;border-color:#fff #696969 #696969 #fff;display:flex;align-items:center;justify-content:center}
  .b i{border:4px solid transparent;border-top-color:${d?'#a0a0a0':'#000'};border-bottom:0}`)+`<slot></slot><div class="b"><i></i></div>`;
 }
}
def('combo-box',ComboBox);

class ToolArea extends HTMLElement{
 connectedCallback(){
  const b=s=>s.split(' ').map(n=>n=='|'?'<tool-sep></tool-sep>':n=='v'?'<drop-arrow></drop-arrow>':n[0]=='*'?`<tool-button pressed icon="${n.slice(1)}"></tool-button>`:`<tool-button icon="${n}"></tool-button>`).join('');
  this.attachShadow({mode:'open'}).innerHTML=base(`
  :host{display:flex;flex-direction:column;height:95px;padding-top:1px;background:#efefef;box-sizing:border-box}.r{display:flex;height:31px;margin-left:-1px}
  .gap{width:23px}combo-box+combo-box{margin-left:1px}`)+
  `<div class="r"><tool-band w="642">${b('new open save | print | find repl | comp1 comp2 | ent *lvl1 lvl2 | undo redo | zout zin zeq zfit zsel | sub v |')}<combo-box w="110" disabled><fit-text w="56"><b>Physical</b></fit-text></combo-box></tool-band>
  <tool-band w="155">${b('*cur tbl view r1 r2 r3')}</tool-band><div class="gap"></div><tool-band w="178">${b('s1 s2 s3 s4 s5 s6 s7')}</tool-band></div>
  <div class="r"><tool-band w="476"><combo-box w="169"><fit-text w="111">Microsoft Sans Serif</fit-text></combo-box><combo-box w="69"><fit-text w="13">10</fit-text></combo-box>${b('| B I U S | hT v hF v hL v')}</tool-band><tool-band w="209">${b('a1 a2 a3 a4 | a5 a6 a7 a8')}</tool-band></div>
  <div class="r"><tool-band w="333">${b('d1 d2 | lock | d3 d4 | d5 d6 d7 d8 | flow d9 | d10')}</tool-band><tool-band w="132">${b('g1 g2 g3 g4 g5')}</tool-band><tool-band w="316">${b('t1 t2 t3 t4 c1 c2 t5 t6 t7 t8 t9 t10 t11')}</tool-band></div>`;
 }
}
def('tool-area',ToolArea);

const tree=[[0,'-','doc','Model_1',40],[1,'','agg','Aggregates',54],[1,'','arole','Application Roles',82],[1,'','agg','Assemblies',52],[1,'','key','Asymmetric Keys',79],[1,'','cert','Certificates',52],[1,'','cred','Credentials',52],[1,'','drule','Data Movement Rules',106],[1,'','dsrc','Data Movement Sources',118],[1,'+','drole','Database Roles',76],[1,'','db','Databases',51],[1,'+','defv','Default Values',69],[1,'+','dom','Domains',41],[1,'','file','Files',21],[1,'','cat','Fulltext Catalogs',77],[1,'','fun','Functions',46],[1,'+','login','Logins',31],[1,'','msrc','Model Sources',71],[1,'','pfun','Partition Functions',87],[1,'','psch','Partition Schemes',85],[1,'','perm','Permissions',55],[1,'+','rel','Relationships',63],[1,'+','sch','Schemas',44],[1,'','scr','Script Templates',79],[1,'','sp','Stored Procedures',88],[1,'-','suba','Subject Areas',66],[2,'+','sub','<Main Subject Area>',100],[2,'+','sub','Caso1',30],[2,'-','sub','Caso2',31,'sel last'],[3,'+','memb','Members',43],[3,'+','sdisp','Stored Displays',73,'last'],[1,'','skey','Symmetric Keys',74],[1,'','syn','Synonyms',48],[1,'+','tabl','Tables',32],[1,'','trans','Transforms',52],[1,'+','ttpl','Trigger Templates',85],[1,'','trig','Triggers',38],[1,'+','user','User Ids',39],[1,'','vrul','Validation Rules',76],[1,'','tview','Views',28],[1,'','xml','XML Schema Collections',118,'last']];

class TreeRow extends HTMLElement{
 set data([lvl,ex,icon,label,w,flags='']){
  const last=flags.includes('last'),sel=flags.includes('sel');
  let g='';for(let i=0;i<lvl;i++)g+=`<i class="c ${i==1?'v':''}"></i>`;
  const box=ex?`<svg class="b" width="9" height="9" viewBox="0 0 9 9"><path d="M.5 .5h8v8h-8z" fill="#fff" stroke="#848484"/><path d="M2 4.500h5${ex=='+'?'M4.500 2v5':''}" stroke="#000"/></svg>`:'';
  this.attachShadow({mode:'open'}).innerHTML=base(`
  :host{display:flex;height:16px;align-items:center;font-size:11px;line-height:16px}
  .c,.e{flex:none;width:20px;height:16px;--d:repeating-linear-gradient(#8a8a8a 0 1px,transparent 1px 2px)}
  .v{background:var(--d) 10px 0/1px 100% no-repeat}
  .e{display:flex;align-items:flex-start;padding:4px 0 0 6px;background:${lvl?`var(--d) 10px 0/1px ${last?'8px':'100%'} no-repeat,`:''}repeating-linear-gradient(90deg,#8a8a8a 0 1px,transparent 1px 2px) 10px 8px/11px 1px no-repeat}
  .i{flex:none;width:20px;padding-left:2px}.t{padding:0 3px 0 3px;margin-left:1px;${sel?'background:#dedede':''}}`)+
  `${g}<div class="e">${box}</div><div class="i"><app-icon name="${icon}"></app-icon></div><div class="t"><fit-text w="${w}"></fit-text></div>`;
  this.shadowRoot.querySelector('fit-text').textContent=label;
 }
}
def('tree-row',TreeRow);

class ExplorerPanel extends HTMLElement{
 connectedCallback(){
  const r=this.attachShadow({mode:'open'});
  r.innerHTML=base(`
  :host{display:flex;flex-direction:column;box-sizing:border-box;width:317px;height:886px;background:#efefef;flex:none;border-right:1px solid #a0a0a0;box-shadow:inset -4px 0 #efefef,inset -5px 0 #fff}
  .h{display:flex;height:14px;padding:1px 0 0 5px;align-items:flex-start}
  .l{width:274px;height:7px;margin-top:4px;border:1px solid;border-color:#c8c8c8 #a0a0a0 #c8c8c8 #fff;border-width:2px 1px 2px 0}
  .x{width:11px;height:12px;margin-left:2px;background:#efefef;border:1px solid;border-color:#fff #696969 #696969 #fff}.x svg{display:block}
  .bar{display:flex;height:28px;padding:3px 0 0 3px;align-items:flex-start;--sep:6px}
  .f{margin-left:3px;width:302px;height:820px;border:1px solid #d6d6d6;padding:3px 2px 4px 3px;margin-top:1px}
  .t{height:811px;border:1px solid #5c5c5c;background:#fefefe;padding:0}
  tree-row{margin-left:-2px}
  .tabs{display:flex;padding-left:3px;align-items:flex-start;margin-top:-1px;font:11px/16px "DejaVu Sans",sans-serif}
  .a,.s{display:flex;align-items:center;height:22px;background:#d7e7f7}.a{width:66px;padding-left:5px;gap:4px}.s{background:#efefef;border:1px solid #d6d6d6;height:20px;width:94px;padding-left:1px;gap:3px;padding-top:1px}`)+
  `<div class="h"><div class="l"></div><div class="x"><svg width="9" height="10"><path d="M1.500 3h6l-3 3.500z" fill="#a0a0a0"/></svg></div><div class="x"><svg width="9" height="10"><path d="M1.500 2l6 6M7.500 2l-6 6" stroke="#000" stroke-width="1.700"/></svg></div></div>
  <div class="bar">${'back fwd | prop trash | find2 findg | help'.split(' ').map(n=>n=='|'?'<tool-sep></tool-sep>':`<tool-button icon="${n}"></tool-button>`).join('')}</div>
  <div class="f"><div class="t"></div></div>
  <div class="tabs"><div class="a"><app-icon name="doc"></app-icon><fit-text w="30">Model</fit-text></div><div class="s"><app-icon name="sub"></app-icon><fit-text w="64">Subject Area</fit-text></div></div>`;
  const t=r.querySelector('.t');
  for(const d of tree){const e=document.createElement('tree-row');t.append(e);e.data=d;}
 }
}
def('explorer-panel',ExplorerPanel);

/* Diagram entity: a name, key columns and plain columns, each as [text, width] */
class ErEntity extends HTMLElement{
 connectedCallback(){
  const rows=JSON.parse(this.getAttribute('rows')),sel=this.hasAttribute('selected');
  this.attachShadow({mode:'open'}).innerHTML=base(`
  :host{display:block;font-size:20.500px;line-height:25px}
  .n{${sel?'background:#000;color:#fff;height:26px;margin-bottom:3px;width:281px;padding-top:1px':'height:25px;margin-bottom:2px'}}
  .n fit-text{${sel?'':'margin-top:-1px'}}
  .b{border:1px solid #000;${sel?'width:281px;height:157px':'width:342px;height:157px;border-radius:14px'}}
  .k{height:${sel?'48px':'116px'};${sel?'padding:8px 0 0 11px':'border-bottom:1px solid #000;padding:8px 0 0 12px'}}
  .a{padding:${sel?'0 0 0 11px':'8px 0 0 12px'};line-height:25.300px}.k{line-height:25.100px}`)+
  `<div class="n"><fit-text w="${rows.n[1]}">${rows.n[0]}</fit-text></div><div class="b"><div class="k">${rows.k.map(([t,w])=>`<fit-text w="${w}">${t}</fit-text>`).join('')}</div><div class="a">${rows.a.map(([t,w])=>`<fit-text w="${w}">${t}</fit-text>`).join('')}</div></div>`;
 }
}
def('er-entity',ErEntity);

class ScribbleText extends HTMLElement{
 connectedCallback(){
  const ls=[['FECHA',142,'.......',44],['01.01.2020',208,'....',33],['02.01.2020',208,'.....',11],['03.01.2020',208,'.......',11],0,0,['31.01.2020',208,'.......',11],['01.02.2020',208,'...',11]];
  this.attachShadow({mode:'open'}).innerHTML=base(`:host{display:block;color:#00f;font-size:42px;line-height:48px}.l{display:flex;height:48px}`)+
  ls.map(l=>l?`<div class="l"><fit-text w="${l[1]}">${l[0]}</fit-text><fit-text style="margin-left:${l[3]}px" w="${l[2].length*12}">${l[2]}</fit-text></div>`:'<div class="l"></div>').join('');
 }
}
def('scribble-text',ScribbleText);

class DiagramCanvas extends HTMLElement{
 connectedCallback(){
  const esc=o=>JSON.stringify(o).replace(/"/g,'&quot;');
  const fact={n:['FACT_VENTAS2',158],k:[['ID_VENTA: integer NOT NULL',271],['ID_CLIENTE: integer NOT NULL',281],['ID_PRODUCTO: integer NOT NULL',317],['FECHA: datetime NOT NULL (FK)',302]],a:[['IMPORTE: money NULL',215]]};
  const dim={n:['DIM_TIEMPO2',135],k:[['FECHA: datetime NOT NULL',256]],a:[['MES: integer NULL',169],['DIA_ANIO: integer NULL',218],['DIA_MES: integer NULL',213],['TRIMESTRE: integer NULL',239]]};
  const h=[];for(const y of [267,358,450])for(const x of [1016,1154,1294])if(!(y==358&&x==1154))h.push(`<path d="M${x+.5} ${y+.5}h10v10h-10z" fill="#fff" stroke="#000"/>`);
  this.attachShadow({mode:'open'}).innerHTML=base(`
  :host{display:block;position:relative;width:1574px;height:840px;overflow:hidden;background:#fefefe}
  er-entity,scribble-text,svg{position:absolute}svg{left:0;top:0}`)+
  `<er-entity style="left:203px;top:124px" rows="${esc(fact)}"></er-entity><er-entity selected style="left:701px;top:133px" rows="${esc(dim)}"></er-entity>
  <svg width="1574" height="840" viewBox="320 138 1574 840" fill="none"><path d="M865 364.500h73.500v-12H1021M1005.500 341v22M881.500 353v22M865 358l17 6-17 6" stroke="#000"/><circle cx="889" cy="364" r="7.700" stroke="#000"/>${h.join('')}
  <rect x="523" y="340" width="349" height="41" stroke="#00f" stroke-width="12"/><rect x="1019.500" y="303.500" width="291" height="36" stroke="#00f" stroke-width="5"/>
  <path d="M879 342.500L893 341l17-4 20-8 23-5.500 24-2.500 16-4 11-.5 13 3" stroke="#00f" stroke-width="11.500" stroke-linejoin="round"/></svg>
  <scribble-text style="left:225px;top:423px"></scribble-text>`;
 }
}
def('diagram-canvas',DiagramCanvas);

class DocWindow extends HTMLElement{
 connectedCallback(){
  const ch=(d,w,h)=>`<svg width="${w}" height="${h}" viewBox="0 0 ${w} ${h}"><path d="${d}" fill="none" stroke="#606060" stroke-width="2.200"/></svg>`;
  this.attachShadow({mode:'open'}).innerHTML=base(`
  :host{display:block;box-sizing:border-box;position:relative;flex:1;height:886px;background:#fefefe;border-top:2px solid #696969;border-left:1px solid #696969;border-right:1px solid #e3e3e3;border-bottom:1px solid #e3e3e3}
  .g{display:grid;grid-template:840px 16px/1574px 16px;padding-left:2px;width:1592px;height:856px}
  svg{display:block}.v{background:#efefef;display:flex;flex-direction:column;justify-content:space-between;width:16px}.v i{height:17px;background:#cdcdcd;margin-bottom:auto}
  .z{background:#efefef;display:flex;grid-column:1/3}.z i{width:17px;background:#cdcdcd;margin-right:auto}.z svg:last-child{margin-right:16px}
  .o{position:absolute;left:0;top:0}.n{position:absolute;left:29px;top:862px;font:11px/16px "DejaVu Sans",sans-serif}`)+
  `<div class="g"><diagram-canvas></diagram-canvas><div class="v">${ch('M3.500 10.500L7.500 6.500l4 4',16,17)}<i></i>${ch('M3.500 6.500l4 4 4-4',16,17)}</div><div class="z">${ch('M9.500 4L6 7.500 9.500 11',16,16)}<i></i>${ch('M5.500 4L9 7.500 5.500 11',17,16)}</div></div>
  <svg class="o" width="1601" height="883" viewBox="318 138 1601 883" fill="none" stroke="#000"><path d="M319 138v856" stroke-width="2"/>
  <path d="M320 994.500h14M402 994.500h1508.500V138M320.500 994v3.500h17M400 997.500h1513.500V141.500h-3M324.500 997v3.500h14M1914 144.500h2.500V149"/><path d="M398 1001h1519V148" stroke-width="2"/>
  <path d="M334 994.500q4 2 5 7l3 12q1 6 5 6.500h43q4-1 5-6l3-12q1-5 5-7z" fill="#fefefe" stroke="none"/><path d="M333 994.500q5 2 6 7l3 12q1 6 5 6h43q4-1 5-6l3-12q1-5 5-7"/><path d="M348 1021h43q4-1 6-6l3-13" stroke="#777"/></svg>
  <fit-text class="n" w="41">Display1</fit-text>`;
 }
}
def('doc-window',DocWindow);

class StatusBar extends HTMLElement{
 connectedCallback(){
  this.attachShadow({mode:'open'}).innerHTML=base(`
  :host{display:flex;box-sizing:border-box;height:26px;padding:3px 10px 8px 4px;gap:2px;background:linear-gradient(#efefef 17px,#fff 17px 18px,#e2e2e2 18px);border-bottom:1px solid #e8504a;font:12px/14px "Open Sans",sans-serif;width:1920px}
  div{border:1px solid;border-color:#a0a0a0 #fff #fff #a0a0a0;height:15px}`)+
  `<div style="flex:1"><fit-text w="31">Ready</fit-text></div><div style="width:60px"></div><div style="width:20px"></div><div style="width:20px"></div><div style="width:100px;padding-left:1px"><fit-text w="97" style="font-family:'DejaVu Sans';font-size:11px">SQL Server 2005/20</fit-text></div>`;
 }
}
def('status-bar',StatusBar);

class TaskBar extends HTMLElement{
 connectedCallback(){
  const a=[['mail',''],['edge','u'],['opera',''],['expl','u2'],['avast',''],['ff','u'],['chrome','u'],['brave',''],['pdf','u2'],['cmd','u'],['word','u'],['note','u'],['snip','u'],['npp','u'],['vlc','u'],['excel','u'],['zoom','u'],['any','u'],['ssms','u'],['erw','act']];
  const tr=[['chev',23],['meet',24],['mic',24],['bat',24],['net',25],['vol',24]];
  this.attachShadow({mode:'open'}).innerHTML=base(`
  :host{display:flex;height:32px;align-items:flex-end;overflow:hidden;background:#182736;width:1920px;color:#fff;font-family:"Open Sans",sans-serif}
  .w{display:flex;flex:none;height:40px;width:1920px;align-items:stretch}
  .c{display:flex;align-items:center;justify-content:center;flex:none;position:relative}
  .s{width:344px;background:#333;border:1px solid #565656;border-width:0 1px 1px;display:flex;align-items:center;padding-left:8px;gap:7px;font-size:15px;color:#d8d8d8}
  .a{width:49px}.mail{background:#2f3e4c}.act{background:#46535f}
  .u:after,.u2:after,.act:after{content:"";position:absolute;bottom:0;left:4px;width:40px;height:2px;background:#76b5ec}
  .u2:after{background:linear-gradient(90deg,#76b5ec 31px,#182736 31px 32px,#4f7ba4 32px)}.act:after{left:0;width:49px}
  .k{display:flex;flex-direction:column;align-items:center;width:78px;font-size:12px;line-height:17px;padding-top:2px;margin-left:5px}
  .r{display:flex;align-items:center;margin-left:auto}.e{border-right:1px solid #566;height:40px;width:1px;margin:0 5px 0 15px}`)+
  `<div class="w"><div class="c" style="width:48px"><app-icon big name="win"></app-icon></div><div class="s"><app-icon big name="search"></app-icon><fit-text w="162">Escribe aquí para buscar</fit-text></div><div class="c" style="width:51px;padding-right:3px"><app-icon big name="task"></app-icon></div>
  ${a.map(([n,u])=>`<div class="c a ${n} ${u}"><app-icon big name="${n}"></app-icon></div>`).join('')}
  <div class="r">${tr.map(([n,w])=>`<div class="c" style="width:${w}px"><app-icon big name="${n}"></app-icon></div>`).join('')}<fit-text w="20" style="font-size:12px;margin-left:7px">ESP</fit-text><div class="k"><fit-text w="27">19:36</fit-text><fit-text w="59">28/12/2020</fit-text></div><app-icon big name="msg" style="margin-left:4px"></app-icon><i class="e"></i></div></div>`;
 }
}
def('task-bar',TaskBar);

class ErwinDesktop extends HTMLElement{
 connectedCallback(){
  this.attachShadow({mode:'open'}).innerHTML=base(`:host{display:flex;flex-direction:column;width:1920px;height:1080px;overflow:hidden;background:#efefef}.m{display:flex;height:886px}`)+
  `<title-bar></title-bar><menu-bar></menu-bar><tool-area></tool-area><div class="m"><explorer-panel></explorer-panel><doc-window></doc-window></div><status-bar></status-bar><task-bar></task-bar>`;
 }
}
def('erwin-desktop',ErwinDesktop);
</script>
</body>
</html>
